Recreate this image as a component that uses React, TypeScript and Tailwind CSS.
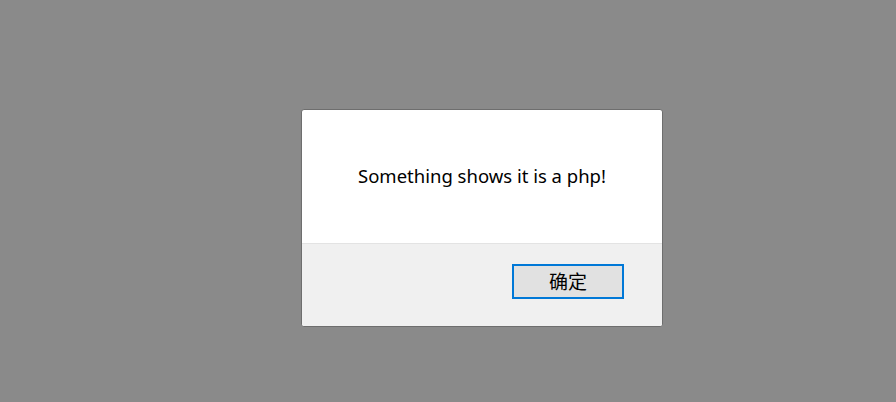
export default function App() {
  return (
    <div
      className="w-[896px] h-[402px] bg-[#8a8a8a] pt-[109px] pl-[301px]"
      style={{ fontFamily: '"Noto Sans", "Noto Sans CJK SC", sans-serif' }}
    >
      <div className="w-[362px] h-[218px] border border-[#6e6e6e] rounded-[3px] overflow-hidden flex flex-col bg-white">
        <div className="h-[134px] flex items-center justify-center border-b border-[#e3e3e3]">
          <p className="text-[18.5px] text-black pb-[2px]">Something shows it is a php!</p>
        </div>
        <div className="flex-1 bg-[#f0f0f0] flex justify-end items-start pt-[20px] pr-[38px]">
          <button
            className="w-[112px] h-[35px] border-2 border-[#0078d7] bg-[#e1e1e1] text-[19px] text-black flex items-center justify-center"
            style={{ fontFamily: '"Noto Sans CJK SC", sans-serif' }}
          >
            确定
          </button>
        </div>
      </div>
    </div>
  );
}
